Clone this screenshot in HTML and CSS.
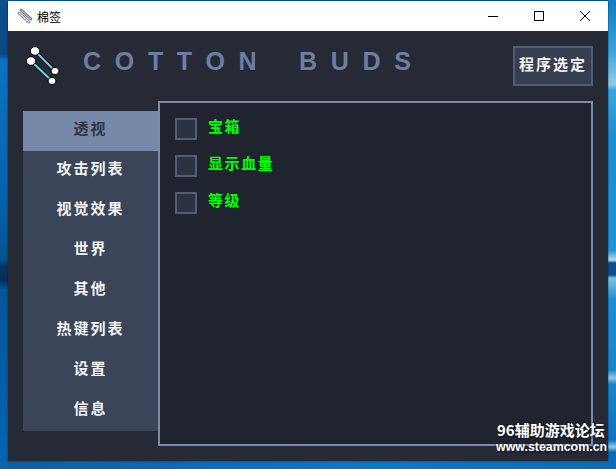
FILE: index.html
```html
<!DOCTYPE html>
<html lang="zh">
<head>
<meta charset="utf-8">
<title>棉签</title>
<link rel="stylesheet" href="styles.css">
</head>
<body>
<div class="desktop">
  <div class="window">
    <header class="titlebar">
      <svg class="app-icon" viewBox="0 0 16 16" width="16" height="16">
        <path d="M4 2 L14 11" stroke="#555" stroke-width="2.6" stroke-linecap="round"/>
        <path d="M4 2 L14 11" stroke="#8fd4e4" stroke-width="1.2" stroke-linecap="round"/>
        <path d="M2 5 L12 14" stroke="#555" stroke-width="2.6" stroke-linecap="round"/>
        <path d="M2 5 L12 14" stroke="#fff" stroke-width="1.2" stroke-linecap="round"/>
      </svg>
      <span class="title-text">棉签</span>
      <div class="win-controls">
        <span class="win-btn"><svg viewBox="0 0 10 10" width="10" height="10"><path d="M0 5.5H10" stroke="#000"/></svg></span>
        <span class="win-btn"><svg viewBox="0 0 10 10" width="10" height="10"><rect x=".5" y=".5" width="9" height="9" fill="none" stroke="#000"/></svg></span>
        <span class="win-btn"><svg viewBox="0 0 10 10" width="10" height="10"><path d="M0 0L10 10M10 0L0 10" stroke="#000"/></svg></span>
      </div>
    </header>
    <main class="client">
      <div class="top-row">
        <svg class="logo" viewBox="0 0 34 42" width="34" height="42">
          <path d="M9 4 L29 24" stroke="#000" stroke-width="3.2"/>
          <path d="M9 4 L29 24" stroke="#62d6ee" stroke-width="2.2"/>
          <path d="M5 14 L26 34" stroke="#000" stroke-width="3.2"/>
          <path d="M5 14 L26 34" stroke="#62d6ee" stroke-width="2.2"/>
          <g fill="#fff" stroke="#000" stroke-width="1">
            <ellipse cx="9" cy="4" rx="4.8" ry="4.3"/>
            <ellipse cx="5" cy="14" rx="4.8" ry="4.3"/>
            <ellipse cx="29" cy="24" rx="4" ry="3.7"/>
            <ellipse cx="26" cy="34" rx="4" ry="3.7"/>
          </g>
        </svg>
        <h1 class="brand">COTTON BUDS</h1>
        <button class="pick-btn">程序选定</button>
      </div>
      <div class="main-row">
        <nav class="sidebar">
          <a class="nav-item active">透视</a>
          <a class="nav-item">攻击列表</a>
          <a class="nav-item">视觉效果</a>
          <a class="nav-item">世界</a>
          <a class="nav-item">其他</a>
          <a class="nav-item">热键列表</a>
          <a class="nav-item">设置</a>
          <a class="nav-item">信息</a>
        </nav>
        <section class="panel">
          <label class="check-row"><span class="box"></span><span class="check-label">宝箱</span></label>
          <label class="check-row"><span class="box"></span><span class="check-label">显示血量</span></label>
          <label class="check-row"><span class="box"></span><span class="check-label">等级</span></label>
        </section>
      </div>
    </main>
  </div>
  <div class="watermark">
    <div class="wm-top">96辅助游戏论坛</div>
    <div class="wm-bottom">www.steamcom.cn</div>
  </div>
</div>
</body>
</html>
```

FILE: styles.css
```css
* { box-sizing: border-box; }
html, body { margin: 0; padding: 0; }
body { width: 616px; height: 469px; overflow: hidden; font-family: "Noto Sans CJK SC", "Liberation Sans", sans-serif; }
.desktop {
  position: relative; width: 616px; height: 469px; overflow: hidden;
  background-color: #0563ae;
  background-image:
    linear-gradient(180deg, #0c4f8a 0, #0a4a86 55px, #0a74c4 60px, #0a6cb8 120px, #0562ac 200px, #04558f 258px, #033564 266px, #023058 280px, #04569c 290px, #0560a8 400px, #0566b4 469px),
    linear-gradient(180deg, #0f7cc4 0, #3aa3dc 50px, #8ecbe8 84px, #3aa6e0 90px, #1c8ed4 140px, #1e94d8 250px, #b5dcf0 260px, #0a4f90 263px, #0a4f90 275px, #7fc3e6 278px, #1a8ed6 300px, #1a86cc 370px, #8ecbe8 378px, #1a86cc 384px, #0d74c0 440px, #8ecbe8 447px, #0a6cb8 452px, #0a6cb8 469px),
    linear-gradient(90deg, #0a5fa8 0, #0a6cbc 200px, #0a7ac8 60%, #0a6cb8 100%);
  background-size: 8px 100%, 8px 100%, 100% 8px;
  background-position: 0 0, 100% 0, 0 100%;
  background-repeat: no-repeat;
}
.window {
  position: absolute; left: 8px; top: 1px; width: 600px; height: 460px;
  display: flex; flex-direction: column;
  box-shadow: 0 0 2px rgba(0,0,0,.55);
}
.titlebar { height: 30px; background: #fff; display: flex; align-items: center; padding-left: 9px; flex: none; }
.app-icon { flex: none; }
.title-text { margin-left: 4px; font-size: 12px; color: #000; }
.win-controls { margin-left: auto; display: flex; }
.win-btn { width: 46px; height: 30px; display: flex; align-items: center; justify-content: center; }
.client { flex: 1; background: #252a35; padding: 15px; display: flex; flex-direction: column; }
.top-row { height: 55px; display: flex; align-items: flex-start; flex: none; }
.logo { margin-left: 3px; margin-top: 1px; flex: none; }
.brand { margin: 1px 0 0 23px; font: bold 25px "Liberation Sans", sans-serif; letter-spacing: 13.7px; word-spacing: 8px; color: #6c7fa2; white-space: nowrap; line-height: 28px; }
.pick-btn {
  margin-left: auto; width: 80px; height: 40px; background: #353f50; border: 2px solid #4e5e78;
  color: #f2f2f2; font: bold 15px/15px "Noto Sans CJK SC", sans-serif; letter-spacing: 2px; padding: 0 0 5px; white-space: nowrap;
}
.main-row { flex: 1; display: flex; align-items: flex-start; }
.sidebar { width: 135px; margin-top: 10px; background: #3a4557; display: flex; flex-direction: column; flex: none; }
.nav-item { height: 40px; display: flex; align-items: center; justify-content: center; padding-bottom: 6px; color: #f2f2f2; font-weight: 700; font-size: 15px; line-height: 16px; letter-spacing: 2px; }
.nav-item.active { background: #7789a8; color: #2f3643; }
.panel { width: 435px; height: 345px; border: 2px solid #7b8cab; background: #1f242f; padding: 15px; display: flex; flex-direction: column; gap: 15px; flex: none; }
.check-row { display: flex; height: 22px; align-items: flex-start; }
.box { width: 22px; height: 22px; background: #2c3240; border: 2px solid #4e5e78; flex: none; }
.check-label { margin-left: 11px; color: #00ff00; font-weight: 700; font-size: 15px; letter-spacing: 1.6px; line-height: 16px; }
.watermark { position: absolute; left: 496px; top: 421px; width: 120px; color: #fff; font-weight: 700; text-shadow: 0 0 2px #223, 1px 1px 2px rgba(0,0,0,.6); white-space: nowrap; }
.wm-top { font-size: 15px; line-height: 18px; margin-left: 1px; }
.wm-bottom { font-size: 12.4px; line-height: 16px; font-family: "Liberation Sans", sans-serif; }
```
